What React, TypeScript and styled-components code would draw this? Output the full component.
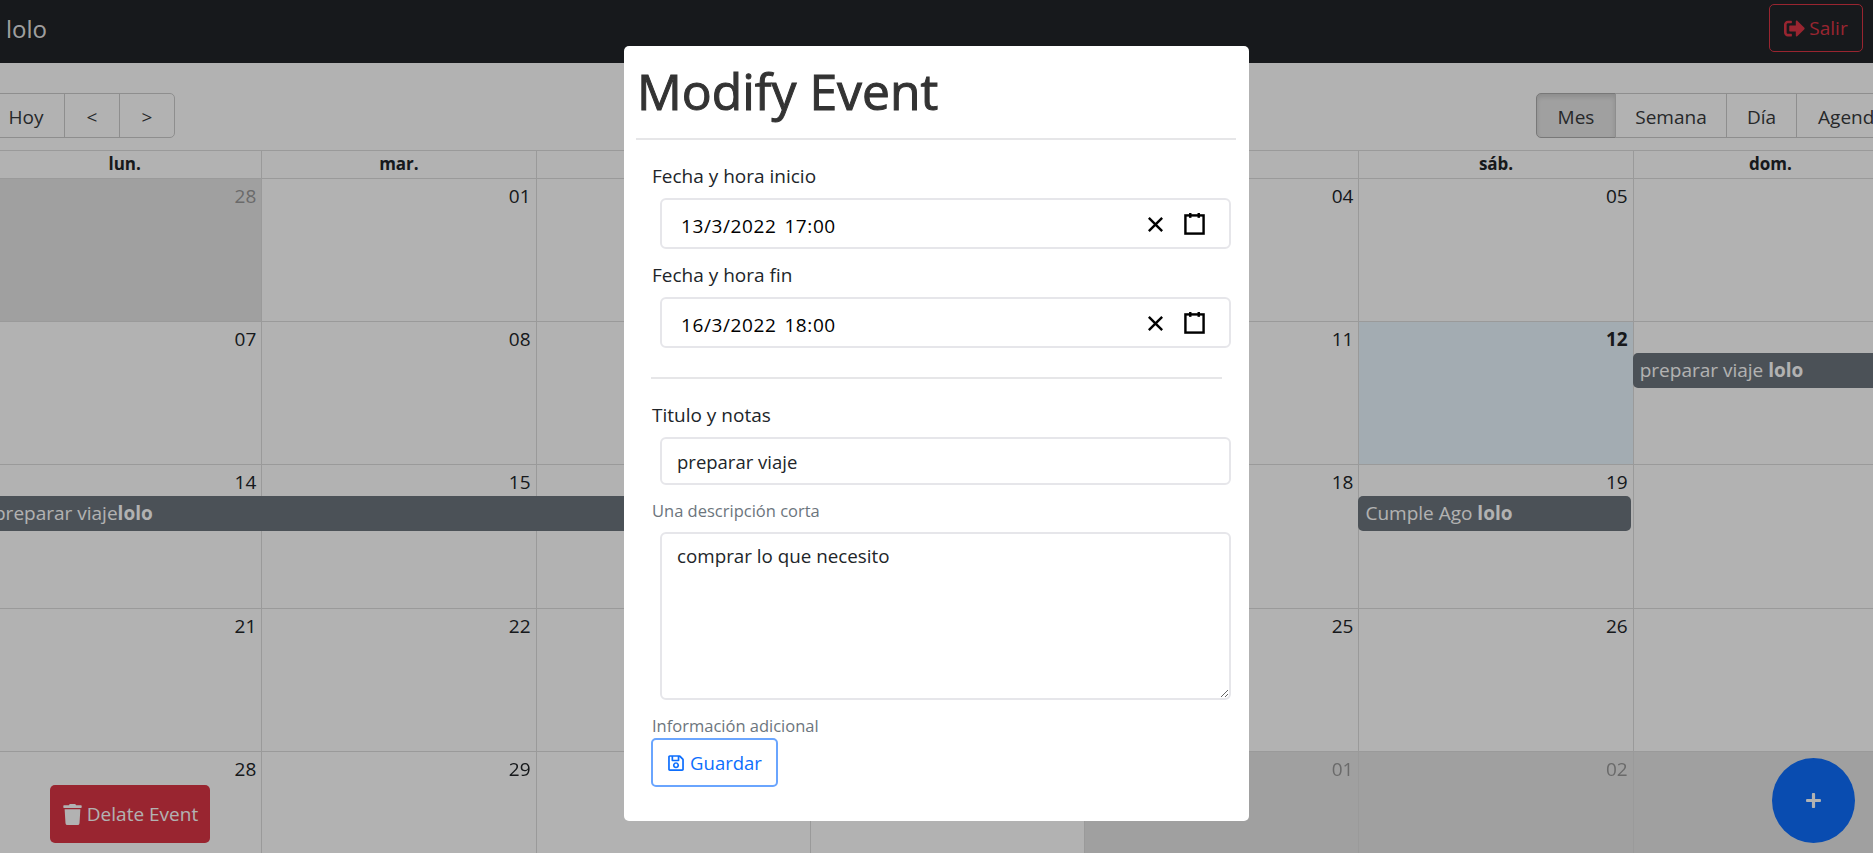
import React, { FC } from 'react';
import styled, { createGlobalStyle } from 'styled-components';
import { FaPlus, FaRegSave, FaSignOutAlt, FaTrash } from 'react-icons/fa';

const GlobalStyle = createGlobalStyle`
  html, body {
    margin: 0;
    height: 100%;
    overflow: hidden;
    background: #fff;
    color: #212529;
    font-family: "Open Sans", "Noto Sans", "Liberation Sans", sans-serif;
    font-size: 19px;
  }
  * { box-sizing: border-box; }
`;

const Page = styled.div`
  width: 1873px;
  height: 853px;
  overflow: hidden;
`;

const Navbar = styled.nav`
  height: 63px;
  background: #212529;
  display: flex;
  align-items: center;
  justify-content: space-between;
  padding: 4px 10px 11px 6px;
`;

const Brand = styled.span`
  color: rgba(255, 255, 255, 0.9);
  font-size: 24px;
`;

const LogoutButton = styled.button`
  width: 94px;
  height: 48px;
  border: 1px solid #dc3545;
  border-radius: 5px;
  background: transparent;
  color: #dc3545;
  font: inherit;
  display: flex;
  align-items: center;
  justify-content: center;
  gap: 4px;
  padding: 0;

  svg {
    font-size: 21px;
  }
`;

const Calendar = styled.section`
  width: 1920px;
  margin-left: -13px;
`;

const Toolbar = styled.div`
  display: flex;
  justify-content: space-between;
  padding-top: 30px;
  margin-bottom: 12px;
`;

const ButtonGroup = styled.div`
  display: flex;
`;

const ToolButton = styled.button<{ $width: number; $active?: boolean }>`
  width: ${p => p.$width}px;
  height: 45px;
  margin-left: -1px;
  padding: 2px 0 0;
  border: 1px solid ${p => (p.$active ? '#adadad' : '#ccc')};
  background: ${p => (p.$active ? '#e6e6e6' : 'transparent')};
  box-shadow: ${p => (p.$active ? 'inset 0 3px 5px rgba(0, 0, 0, 0.125)' : 'none')};
  color: #373a3c;
  font: inherit;

  &:first-child {
    margin-left: 0;
    border-radius: 5px 0 0 5px;
  }

  &:last-child {
    border-radius: 0 5px 5px 0;
  }
`;

const HeaderRow = styled.div`
  display: grid;
  grid-template-columns: repeat(7, 1fr);
  height: 29px;
  border-top: 1px solid #ddd;
  border-bottom: 1px solid #ddd;
`;

const HeaderCell = styled.div`
  border-left: 1px solid #ddd;
  text-align: center;
  font-size: 17px;
  font-weight: 700;
  line-height: 26px;
`;

const WeekRow = styled.div`
  display: grid;
  grid-template-columns: repeat(7, 1fr);
  grid-template-rows: 31px 35px 1fr;
  height: 143.2px;
  border-bottom: 1px solid #ddd;
`;

const DayBackground = styled.div<{ $column: number; $tone?: 'off' | 'today' }>`
  grid-column: ${p => p.$column};
  grid-row: 1 / -1;
  border-left: 1px solid #ddd;
  background: ${p => (p.$tone === 'off' ? '#e6e6e6' : p.$tone === 'today' ? '#eaf6ff' : 'transparent')};
`;

const DayNumber = styled.div<{ $column: number; $off?: boolean; $today?: boolean }>`
  grid-column: ${p => p.$column};
  grid-row: 1;
  z-index: 1;
  padding: 4px 5px 0 0;
  text-align: right;
  line-height: 26px;
  color: ${p => (p.$off ? '#999' : 'inherit')};
  font-weight: ${p => (p.$today ? 700 : 400)};
`;

const EventBar = styled.div<{ $start: number; $span: number; $square?: boolean }>`
  grid-column: ${p => p.$start} / span ${p => p.$span};
  grid-row: 2;
  z-index: 1;
  margin-right: 2px;
  padding-left: 7px;
  background: #6c757d;
  border-radius: ${p => (p.$square ? '0' : '5px')};
  color: #fff;
  font-size: 19px;
  line-height: 34px;
  white-space: nowrap;
  overflow: hidden;
`;

const DeleteButton = styled.button`
  position: fixed;
  left: 50px;
  bottom: 10px;
  width: 160px;
  height: 58px;
  border: 0;
  border-radius: 5px;
  background: #dc3545;
  color: #fff;
  font: inherit;
  display: flex;
  align-items: center;
  justify-content: center;
  gap: 4px;
  padding: 0;

  svg {
    font-size: 21px;
  }
`;

const AddButton = styled.button`
  position: fixed;
  right: 18px;
  bottom: 10px;
  width: 83px;
  height: 85px;
  border: 0;
  border-radius: 50%;
  background: #0d6efd;
  color: #fff;
  font-size: 17px;
  display: flex;
  align-items: center;
  justify-content: center;
`;

const Overlay = styled.div`
  position: fixed;
  inset: 0;
  z-index: 10;
  background: rgba(0, 0, 0, 0.3);
  display: flex;
  justify-content: center;
  align-items: flex-start;
  padding-top: 46px;
`;

const Modal = styled.div`
  width: 625px;
  height: 775px;
  padding: 0 13px 0 12px;
  background: #fff;
  border-radius: 5px;
`;

const Title = styled.h1`
  margin: 10px 0 12px 1px;
  font-size: 49.8px;
  font-weight: 400;
  line-height: 70px;
  color: #333;
  -webkit-text-stroke: 1px #333;
`;

const Rule = styled.hr`
  height: 2px;
  margin: 0;
  border: 0;
  background: #e6e6e8;
`;

const Form = styled.form`
  padding: 21px 0 0 15px;
`;

const FieldLabel = styled.label`
  display: block;
  height: 30px;
  padding-left: 1px;
  line-height: 30px;
`;

const DateControl = styled.div`
  width: 571px;
  height: 51px;
  margin: 7px 0 11px 9px;
  padding: 0 23px 0 19px;
  border: 2px solid #e6e6ea;
  border-radius: 6px;
  display: flex;
  align-items: center;
`;

const DateValue = styled.span`
  flex: 1;
  padding-top: 4px;
  color: #000;
  font-size: 19px;
  letter-spacing: 0.6px;
`;

const TimeValue = styled.span`
  margin-left: 8px;
`;

const ClearIcon = styled.svg`
  width: 23px;
  height: 23px;
  margin: 1px 16px 0 0;
  stroke: #000;
  stroke-width: 2;
`;

const CalendarIcon = styled.svg`
  width: 23px;
  height: 23px;
  margin-top: 1px;
  fill: none;
  stroke: #000;
  stroke-width: 2;
`;

const SectionRule = styled(Rule)`
  width: 571px;
  margin: 29px 0 21px;
`;

const TextField = styled.input`
  display: block;
  width: 571px;
  height: 48px;
  margin: 7px 0 13px 9px;
  padding: 0 15px;
  border: 2px solid #e6e6ea;
  border-radius: 6px;
  color: #212529;
  font: inherit;
  font-size: 18.5px;
  outline: none;
`;

const NotesField = styled.textarea`
  display: block;
  width: 571px;
  height: 168px;
  margin: 9px 0 13px 9px;
  padding: 9px 15px;
  border: 2px solid #e6e6ea;
  border-radius: 6px;
  color: #212529;
  font: inherit;
  font-size: 18.8px;
  outline: none;
`;

const HelpText = styled.small`
  display: block;
  height: 25px;
  padding-left: 1px;
  color: #6c757d;
  font-size: 16.5px;
  line-height: 25px;
`;

const SaveButton = styled.button`
  width: 127px;
  height: 49px;
  border: 2px solid #6aa5fe;
  border-radius: 5px;
  background: #fff;
  color: #0d6efd;
  font: inherit;
  font-size: 18.5px;
  display: flex;
  align-items: center;
  justify-content: center;
  gap: 5px;
  padding: 0;

  svg {
    font-size: 18px;
  }
`;

interface DayProps {
  day: string;
  off?: boolean;
  today?: boolean;
}

const weekdays = ['lun.', 'mar.', 'mié.', 'jue.', 'vie.', 'sáb.', 'dom.'];

const month: DayProps[][] = [
  [{ day: '28', off: true }, { day: '01' }, { day: '02' }, { day: '03' }, { day: '04' }, { day: '05' }, { day: '06' }],
  [{ day: '07' }, { day: '08' }, { day: '09' }, { day: '10' }, { day: '11' }, { day: '12', today: true }, { day: '13' }],
  [{ day: '14' }, { day: '15' }, { day: '16' }, { day: '17' }, { day: '18' }, { day: '19' }, { day: '20' }],
  [{ day: '21' }, { day: '22' }, { day: '23' }, { day: '24' }, { day: '25' }, { day: '26' }, { day: '27' }],
  [{ day: '28' }, { day: '29' }, { day: '30' }, { day: '31' }, { day: '01', off: true }, { day: '02', off: true }, { day: '03', off: true }],
];

const DateField: FC<{ date: string; time: string }> = ({ date, time }) => (
  <DateControl>
    <DateValue>
      {date}
      <TimeValue>{time}</TimeValue>
    </DateValue>
    <ClearIcon viewBox="0 0 19 19">
      <line x1="4" y1="4" x2="15" y2="15" />
      <line x1="15" y1="4" x2="4" y2="15" />
    </ClearIcon>
    <CalendarIcon viewBox="0 0 19 19">
      <rect x="2" y="2" width="15" height="15" />
      <line x1="6" y1="0" x2="6" y2="4" />
      <line x1="13" y1="0" x2="13" y2="4" />
    </CalendarIcon>
  </DateControl>
);

const App: FC = () => {
  return (
    <Page>
      <GlobalStyle />
      <Navbar>
        <Brand>lolo</Brand>
        <LogoutButton>
          <FaSignOutAlt />
          Salir
        </LogoutButton>
      </Navbar>
      <Calendar>
        <Toolbar>
          <ButtonGroup>
            <ToolButton $width={78}>Hoy</ToolButton>
            <ToolButton $width={56}>&lt;</ToolButton>
            <ToolButton $width={56}>&gt;</ToolButton>
          </ButtonGroup>
          <ButtonGroup>
            <ToolButton $width={80} $active>Mes</ToolButton>
            <ToolButton $width={112}>Semana</ToolButton>
            <ToolButton $width={71}>Día</ToolButton>
            <ToolButton $width={111}>Agenda</ToolButton>
          </ButtonGroup>
        </Toolbar>
        <HeaderRow>
          {weekdays.map(name => (
            <HeaderCell key={name}>{name}</HeaderCell>
          ))}
        </HeaderRow>
        {month.map((week, w) => (
          <WeekRow key={w}>
            {week.map((d, i) => (
              <DayBackground
                key={i}
                $column={i + 1}
                $tone={d.off ? 'off' : d.today ? 'today' : undefined}
              />
            ))}
            {week.map((d, i) => (
              <DayNumber key={i} $column={i + 1} $off={d.off} $today={d.today}>
                {d.day}
              </DayNumber>
            ))}
            {w === 1 && (
              <EventBar $start={7} $span={1}>
                preparar viaje <b>lolo</b>
              </EventBar>
            )}
            {w === 2 && (
              <>
                <EventBar $start={1} $span={3} $square>
                  preparar viaje<b>lolo</b>
                </EventBar>
                <EventBar $start={6} $span={1}>
                  Cumple Ago <b>lolo</b>
                </EventBar>
              </>
            )}
          </WeekRow>
        ))}
      </Calendar>
      <DeleteButton>
        <FaTrash />
        Delate Event
      </DeleteButton>
      <AddButton>
        <FaPlus />
      </AddButton>
      <Overlay>
        <Modal>
          <Title>Modify Event</Title>
          <Rule />
          <Form>
            <FieldLabel>Fecha y hora inicio</FieldLabel>
            <DateField date="13/3/2022" time="17:00" />
            <FieldLabel>Fecha y hora fin</FieldLabel>
            <DateField date="16/3/2022" time="18:00" />
            <SectionRule />
            <FieldLabel>Titulo y notas</FieldLabel>
            <TextField defaultValue="preparar viaje" />
            <HelpText>Una descripción corta</HelpText>
            <NotesField defaultValue="comprar lo que necesito" />
            <HelpText>Información adicional</HelpText>
            <SaveButton type="button">
              <FaRegSave />
              Guardar
            </SaveButton>
          </Form>
        </Modal>
      </Overlay>
    </Page>
  );
};

export default App;
